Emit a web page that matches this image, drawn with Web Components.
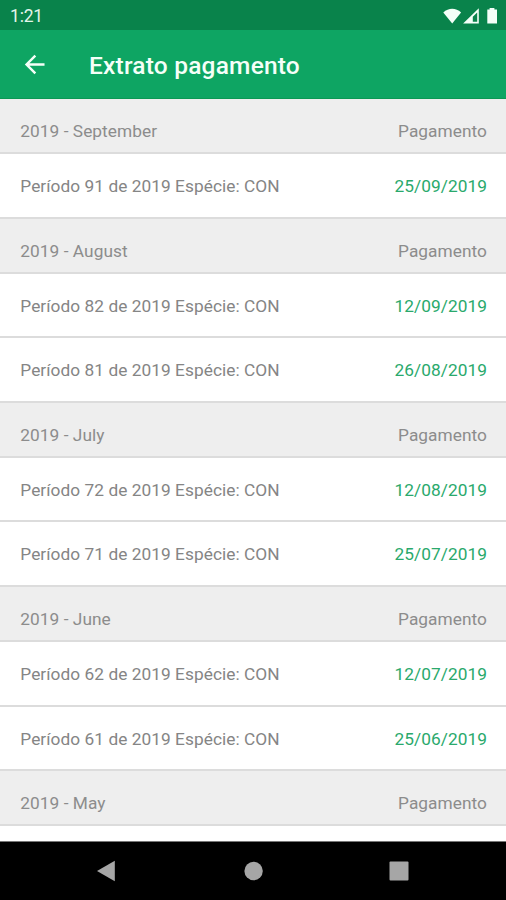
<!DOCTYPE html>
<html lang="pt-BR">
<head>
<meta charset="utf-8">
<title>Extrato pagamento</title>
<style>
    html, body { margin: 0; height: 100%; }
    body {
        font-family: Roboto, "Liberation Sans", sans-serif;
        background: #fff;
        overflow: hidden;
    }
</style>
</head>
<body>
<app-screen>
    <status-bar slot="top">1:21</status-bar>
    <app-header slot="top">Extrato pagamento</app-header>

    <month-header>2019 - September</month-header>
    <payment-row date="25/09/2019">Período 91 de 2019 Espécie: CON</payment-row>

    <month-header>2019 - August</month-header>
    <payment-row date="12/09/2019">Período 82 de 2019 Espécie: CON</payment-row>
    <payment-row date="26/08/2019">Período 81 de 2019 Espécie: CON</payment-row>

    <month-header>2019 - July</month-header>
    <payment-row date="12/08/2019">Período 72 de 2019 Espécie: CON</payment-row>
    <payment-row date="25/07/2019">Período 71 de 2019 Espécie: CON</payment-row>

    <month-header>2019 - June</month-header>
    <payment-row date="12/07/2019">Período 62 de 2019 Espécie: CON</payment-row>
    <payment-row date="25/06/2019">Período 61 de 2019 Espécie: CON</payment-row>

    <month-header>2019 - May</month-header>

    <nav-bar slot="bottom"></nav-bar>
</app-screen>

<script>
// SCREEN
class AppScreen extends HTMLElement {
    constructor() {
        super();
        this.attachShadow({ mode: "open" });

        this.shadowRoot.innerHTML = `
            <style>
                :host {
                    display: flex;
                    flex-direction: column;
                    width: 506px;
                    height: 900px;
                }
                main {
                    flex: 1;
                    min-height: 0;
                    overflow: hidden;
                }
            </style>

            <slot name="top"></slot>
            <main><slot></slot></main>
            <slot name="bottom"></slot>
        `;
    }
}
customElements.define("app-screen", AppScreen);


// STATUS BAR
class StatusBar extends HTMLElement {
    constructor() {
        super();
        this.attachShadow({ mode: "open" });

        this.shadowRoot.innerHTML = `
            <style>
                :host {
                    display: flex;
                    flex: none;
                    align-items: center;
                    justify-content: space-between;
                    box-sizing: border-box;
                    height: 30px;
                    padding: 2px 7px 0 10px;
                    background: #09834b;
                    color: #e4f5ea;
                    font-size: 17.5px;
                    letter-spacing: -0.2px;
                }
                svg { display: block; }
            </style>

            <span><slot></slot></span>
            <svg width="57" height="20" viewBox="0 0 57 20" fill="#f4fff8">
                <path d="M1.3 6.4C6.5 1.5 13.9 1.5 19.1 6.4L10.2 17.4Z"/>
                <path fill-rule="evenodd" d="M36.8 2.3V17.4H21.1ZM35.2 6.5L30.8 10.8V15.8H35.2Z"/>
                <path d="M45.3 3.6H47.6V2H52.4V3.6H55V17.4H45.3Z"/>
            </svg>
        `;
    }
}
customElements.define("status-bar", StatusBar);


// HEADER
class AppHeader extends HTMLElement {
    constructor() {
        super();
        this.attachShadow({ mode: "open" });

        this.shadowRoot.innerHTML = `
            <style>
                :host {
                    display: flex;
                    flex: none;
                    align-items: center;
                    box-sizing: border-box;
                    height: 69px;
                    padding-left: 20px;
                    border-bottom: 1px solid #0b9854;
                    background: #0ea563;
                    color: #f5fff8;
                }
                svg { display: block; margin-top: 1px; }
                h1 {
                    margin: 3px 0 0 40px;
                    font-size: 24.5px;
                    font-weight: 500;
                    line-height: 32px;
                    letter-spacing: 0.2px;
                }
            </style>

            <svg width="29" height="29" viewBox="0 0 24 24" fill="currentColor">
                <path d="M20.3 11H7.83l5.59-5.59L12 4l-8 8 8 8 1.41-1.41L7.83 13H20.3v-2z"/>
            </svg>
            <h1><slot></slot></h1>
        `;
    }
}
customElements.define("app-header", AppHeader);


// MONTH HEADER
class MonthHeader extends HTMLElement {
    constructor() {
        super();
        this.attachShadow({ mode: "open" });

        this.shadowRoot.innerHTML = `
            <style>
                :host {
                    display: flex;
                    align-items: center;
                    justify-content: space-between;
                    box-sizing: border-box;
                    height: 55.1px;
                    padding: 11px 19px 0 20.3px;
                    border-bottom: 2px solid #dcdcdc;
                    background: #eee;
                    color: #8c8c8c;
                    font-size: 17.3px;
                    letter-spacing: 0.05px;
                }
            </style>

            <span><slot></slot></span>
            <span>Pagamento</span>
        `;
    }
}
customElements.define("month-header", MonthHeader);


// PAYMENT ROW
class PaymentRow extends HTMLElement {
    constructor() {
        super();
        this.attachShadow({ mode: "open" });

        this.shadowRoot.innerHTML = `
            <style>
                :host {
                    display: flex;
                    align-items: center;
                    justify-content: space-between;
                    box-sizing: border-box;
                    height: 64.55px;
                    padding: 1.4px 19px 0 20.3px;
                    border-bottom: 2px solid #dcdcdc;
                    background: #fff;
                    color: #858585;
                    font-size: 17.3px;
                    letter-spacing: 0.05px;
                }
                .date { color: #2aa96c; }
            </style>

            <span><slot></slot></span>
            <span class="date"></span>
        `;
    }

    connectedCallback() {
        this.shadowRoot.querySelector(".date").textContent = this.getAttribute("date");
    }
}
customElements.define("payment-row", PaymentRow);


// NAVIGATION BAR
class NavBar extends HTMLElement {
    constructor() {
        super();
        this.attachShadow({ mode: "open" });

        this.shadowRoot.innerHTML = `
            <style>
                :host {
                    display: flex;
                    flex: none;
                    align-items: center;
                    justify-content: center;
                    gap: 126px;
                    box-sizing: border-box;
                    height: 59px;
                    border-top: 1px solid #777;
                    background: #000;
                }
                svg { display: block; fill: #a6a6a6; }
            </style>

            <svg width="20" height="22" viewBox="0 0 20 22"><path d="M0 11L17.8.7V21.3Z"/></svg>
            <svg width="20" height="20" viewBox="0 0 20 20"><circle cx="10.6" cy="10" r="9.2"/></svg>
            <svg width="20" height="20" viewBox="0 0 20 20"><rect x=".5" y=".5" width="19" height="19" rx="1"/></svg>
        `;
    }
}
customElements.define("nav-bar", NavBar);
</script>
</body>
</html>
